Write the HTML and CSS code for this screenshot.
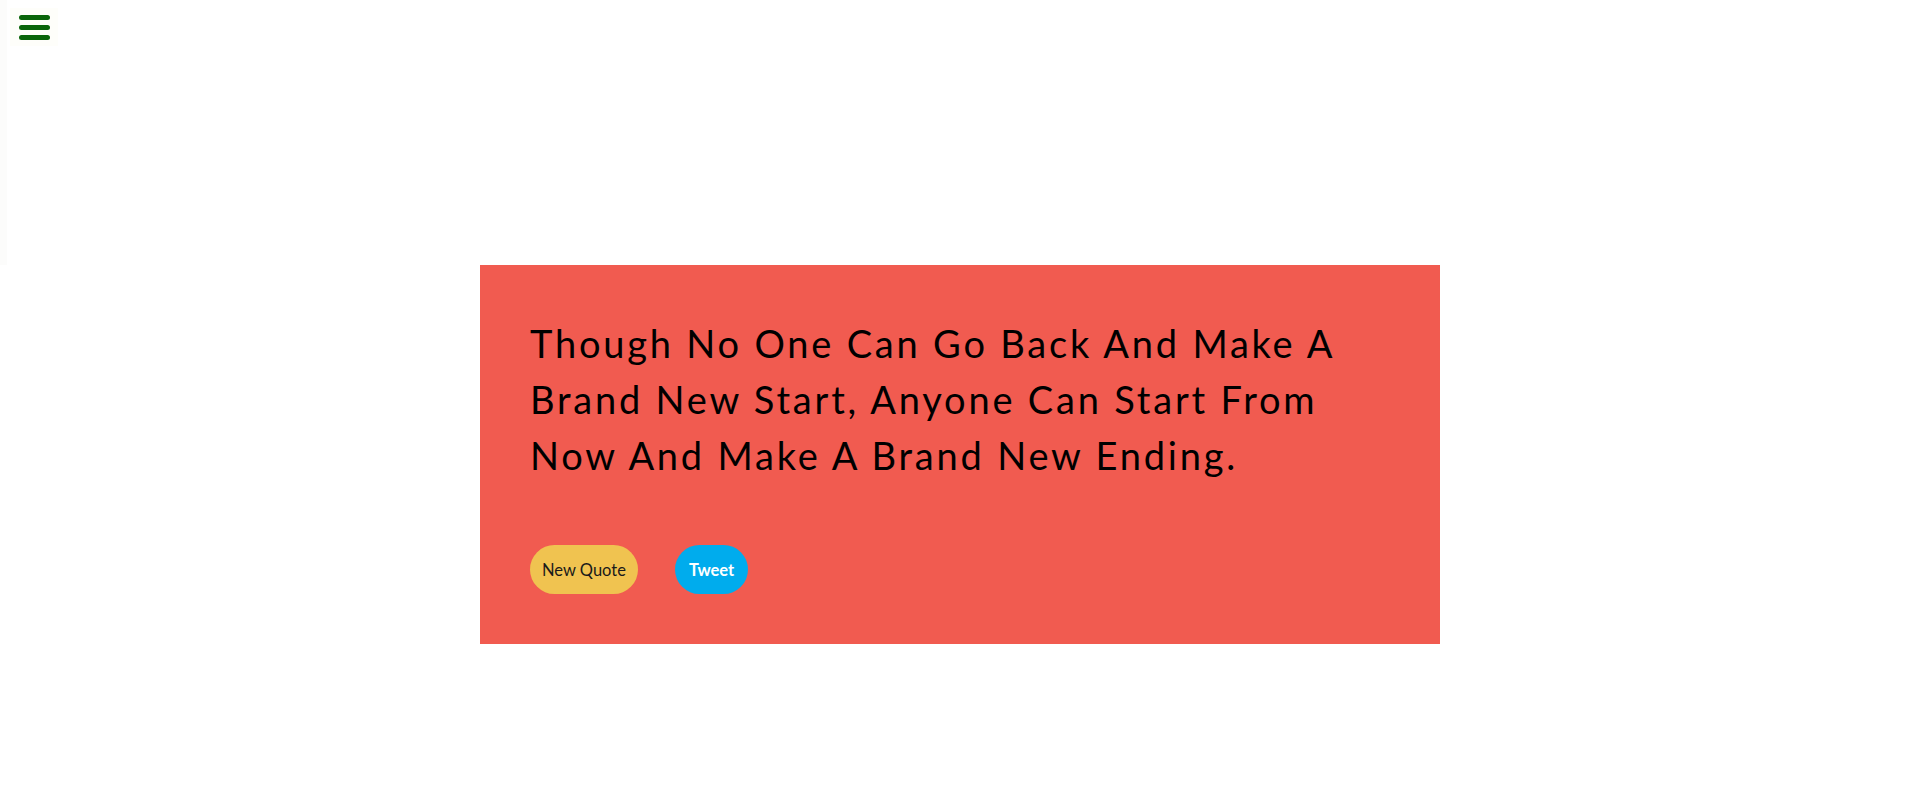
FILE: index.html
```html
<!DOCTYPE html>
<html lang="en">
<head>
<meta charset="utf-8">
<title>Random Quote Machine</title>
<link rel="stylesheet" href="styles.css">
</head>
<body>
  <nav class="sidenav">
    <button class="menu-btn" aria-label="Menu">
      <span class="bar"></span>
      <span class="bar"></span>
      <span class="bar"></span>
    </button>
  </nav>
  <main class="quote-box">
    <p class="quote-text">Though No One Can Go Back And Make A Brand New Start, Anyone Can Start From Now And Make A Brand New Ending.</p>
    <div class="actions">
      <button class="btn btn-new">New Quote</button>
      <button class="btn btn-tweet">Tweet</button>
    </div>
  </main>
</body>
</html>
```
FILE: styles.css
```css
html, body {
  margin: 0;
  padding: 0;
  background: #ffffff;
  font-family: "Source Sans Pro", "Lato", "Noto Sans", sans-serif;
}

.sidenav {
  width: 7px;
  height: 265px;
  background: #fcfcfb;
}

.menu-btn {
  position: absolute;
  top: 8px;
  left: 10px;
  width: 48px;
  height: 38px;
  padding: 0;
  border: none;
  background: #fefefa;
  display: flex;
  flex-direction: column;
  align-items: center;
  justify-content: center;
  gap: 5px;
  cursor: pointer;
}

.bar {
  display: block;
  width: 31px;
  height: 5px;
  border-radius: 2.5px;
  background: #0a650a;
}

.quote-box {
  width: 860px;
  margin: 0 auto;
  padding: 50px;
  background: #f15b50;
  box-sizing: content-box;
}

.quote-text {
  margin: 0;
  font-size: 38px;
  line-height: 56px;
  letter-spacing: 2.8px;
  color: #000000;
  max-width: 820px;
}

.actions {
  display: flex;
  gap: 37px;
  margin-top: 62px;
}

.btn {
  height: 49px;
  border: none;
  border-radius: 25px;
  font-family: inherit;
  font-size: 16.5px;
  cursor: pointer;
}

.btn-new {
  padding: 0 12px;
  background: #f0c350;
  color: #1a1a1a;
}

.btn-tweet {
  padding: 0 14px;
  background: #00aced;
  color: #ffffff;
  font-weight: bold;
}
```
